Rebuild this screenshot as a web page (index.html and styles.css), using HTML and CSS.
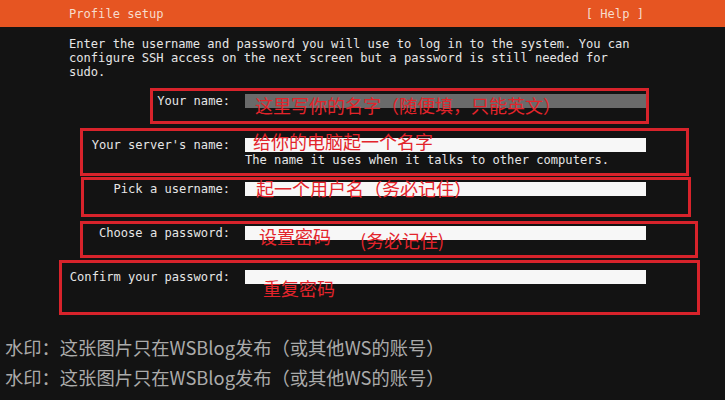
FILE: index.html
```html
<!DOCTYPE html>
<html lang="zh-CN">
<head>
    <meta charset="UTF-8">
    <meta name="viewport" content="width=device-width, initial-scale=1.0">
    <title>Profile setup</title>
    <link rel="stylesheet" href="styles.css">
</head>
<body>
    <header class="topbar">
        <div class="frame topbar-inner">
            <span class="title">Profile setup</span>
            <span class="help">[ Help ]</span>
        </div>
    </header>

    <div class="frame">
        <p class="intro">Enter the username and password you will use to log in to the system. You can<br>configure SSH access on the next screen but a password is still needed for<br>sudo.</p>
    </div>

    <div class="form">
        <div class="row row-name">
            <label class="label">Your name:</label>
            <div class="field">
                <div class="input input-focus"></div>
            </div>
            <div class="mark"></div>
            <span class="note">这里写你的名字（随便填，只能英文）</span>
        </div>
        <div class="row row-server">
            <label class="label">Your server's name:</label>
            <div class="field">
                <div class="input"></div>
                <div class="hint">The name it uses when it talks to other computers.</div>
            </div>
            <div class="mark"></div>
            <span class="note">给你的电脑起一个名字</span>
        </div>
        <div class="row row-user">
            <label class="label">Pick a username:</label>
            <div class="field">
                <div class="input"></div>
            </div>
            <div class="mark"></div>
            <span class="note">起一个用户名（务必记住）</span>
        </div>
        <div class="row row-pass">
            <label class="label">Choose a password:</label>
            <div class="field">
                <div class="input"></div>
            </div>
            <div class="mark"></div>
            <span class="note">设置密码</span>
            <span class="note note-extra">(务必记住)</span>
        </div>
        <div class="row row-confirm">
            <label class="label">Confirm your password:</label>
            <div class="field">
                <div class="input"></div>
            </div>
            <div class="mark"></div>
            <span class="note">重复密码</span>
        </div>
    </div>

    <div class="watermark">
        <p>水印：这张图片只在WSBlog发布（或其他WS的账号）</p>
        <p>水印：这张图片只在WSBlog发布（或其他WS的账号）</p>
    </div>
</body>
</html>
```

FILE: styles.css
```css
body {
    margin: 0;
    padding: 0;
    background-color: #131313;
    color: #e6e6e6;
    font-family: 'DejaVu Sans Mono', 'Liberation Mono', monospace;
    font-size: 12.1px;
    line-height: 14px;
    height: 400px;
    overflow: hidden;
}
.frame {
    width: 577px;
    margin-left: 69px;
}
.topbar {
    background-color: #e65522;
    height: 27px;
}
.topbar-inner {
    display: flex;
    justify-content: space-between;
    align-items: center;
    height: 27px;
    color: #f7dccd;
}
.help {
    margin-right: 2px;
}
.intro {
    margin: 10px 0 0 0;
}
.form {
    margin-top: 15px;
}
.row {
    position: relative;
    display: flex;
    height: 44px;
}
.label {
    width: 163px;
    margin-left: 67px;
    padding-right: 15px;
    text-align: right;
    white-space: nowrap;
}
.field {
    width: 401px;
}
.input {
    height: 14px;
    background-color: #f7f7f7;
}
.input-focus {
    background-color: #6a6a6a;
}
.hint {
    margin-top: 1px;
}
.mark {
    position: absolute;
    border: 3px solid #d8232b;
    box-sizing: border-box;
}
.note {
    position: absolute;
    color: #e3242b;
    font-family: 'Noto Sans CJK SC', sans-serif;
    font-size: 18px;
    line-height: 18px;
    white-space: nowrap;
}
.row-name .mark { left: 150px; top: -6px; width: 499px; height: 36px; }
.row-name .note { left: 255px; top: 2px; }
.row-server .mark { left: 80px; top: -10px; width: 609px; height: 48px; }
.row-server .note { left: 253px; top: -6px; }
.row-user .mark { left: 81px; top: -5px; width: 610px; height: 40px; }
.row-user .note { left: 256px; top: -3px; }
.row-pass .mark { left: 80px; top: -5px; width: 618px; height: 37px; }
.row-pass .note { left: 259px; top: 1px; }
.row-pass .note-extra { left: 360px; top: 5px; }
.row-confirm .mark { left: 59px; top: -10px; width: 641px; height: 55px; }
.row-confirm .note { left: 263px; top: 9px; }
.watermark {
    margin-top: 18px;
    padding-left: 5px;
    color: #ababab;
    font-family: 'Noto Sans CJK SC', sans-serif;
    font-size: 18.3px;
    line-height: 30px;
}
.watermark p {
    margin: 0;
}
```
